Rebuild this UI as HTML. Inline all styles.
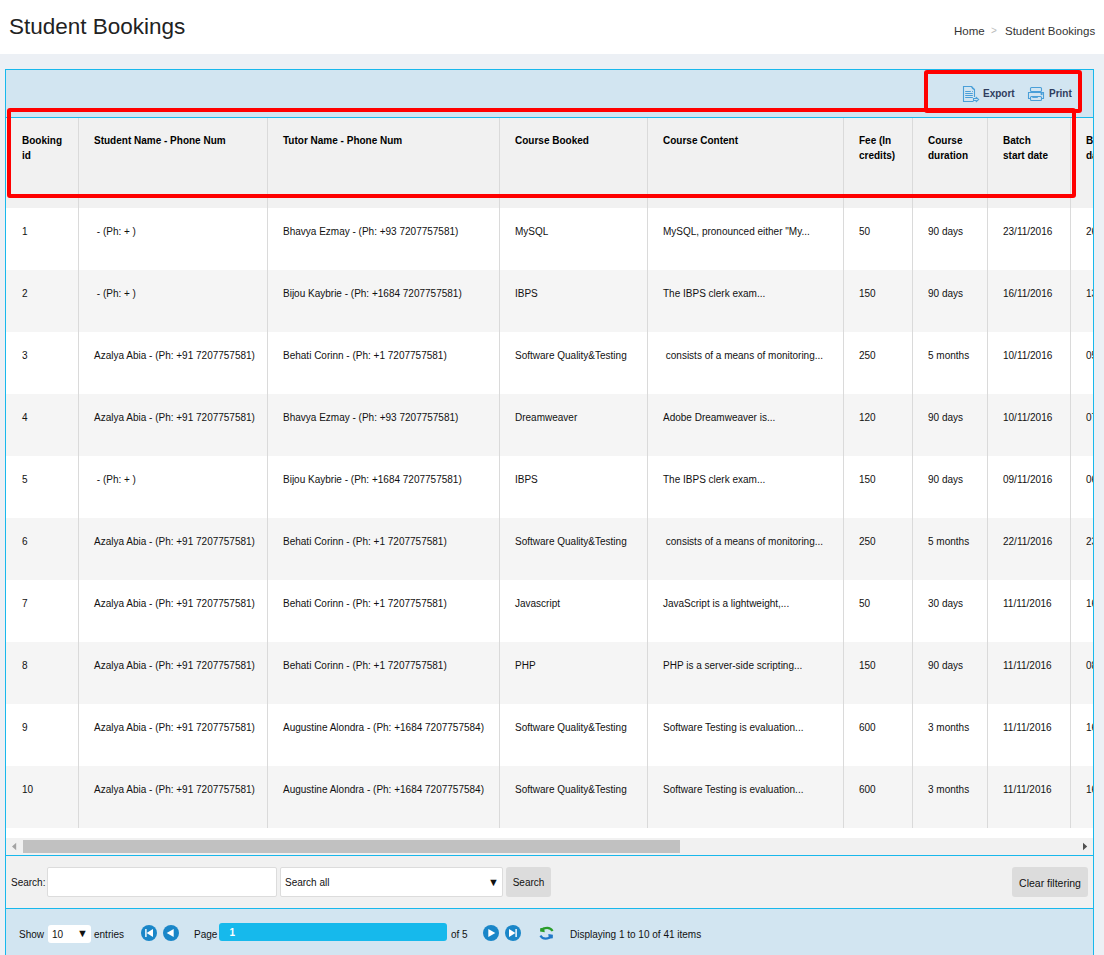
<!DOCTYPE html>
<html><head><meta charset="utf-8">
<style>
*{box-sizing:border-box;margin:0;padding:0}
html,body{width:1104px;height:955px;overflow:hidden;background:#ecf0f5;font-family:"Liberation Sans",sans-serif;color:#111;position:relative}
.a{position:absolute}
.top{position:absolute;left:0;top:0;width:1104px;height:54px;background:#fff}
h1{position:absolute;left:9px;top:13px;font-size:22.5px;font-weight:normal;color:#222;line-height:28px;white-space:nowrap}
.bc{position:absolute;left:954px;top:24px;font-size:11.5px;line-height:14px;color:#333;white-space:nowrap}
.bc .sep{color:#bbb;position:absolute;left:37px;top:0;font-size:10px}
.bc .s2{position:absolute;left:51px;top:0}
.panel{position:absolute;left:5px;top:69px;width:1089px;height:900px;border:1px solid #18b8ec;background:#d2e5f1}
.clip{position:absolute;left:6px;top:70px;width:1087px;height:900px;overflow:hidden}
.clip .in{position:absolute;left:-6px;top:-70px;width:1200px;height:1000px}
.hdr{position:absolute;left:6px;top:117px;width:1200px;height:91px;background:#f1f1f1;border-top:1px solid #18b8ec}
.c{position:absolute;padding:16px 0 0 16px;font-size:10px;line-height:15px;white-space:pre}
.th{font-weight:bold;color:#000;padding-top:15px}
.td{color:#111}
.row{position:absolute;left:6px;width:1200px;height:62px}
.vl{position:absolute;top:118px;width:1px;height:710px;background:#dadada}
.white{position:absolute;left:6px;top:828px;width:1200px;height:10px;background:#fff}
.sb{position:absolute;left:6px;top:838px;width:1087px;height:17px;background:#f1f1f1}
.thumb{position:absolute;left:23px;top:840px;width:657px;height:13px;background:#c1c1c1}
.line{position:absolute;left:6px;width:1087px;height:1px;background:#18b8ec}
.search{position:absolute;left:6px;top:856px;width:1087px;height:52px;background:#f1f1f1}
.lbl{position:absolute;font-size:10px;line-height:12px;white-space:nowrap;color:#111}
.inp{position:absolute;background:#fff;border:1px solid #dcdcdc;border-radius:2px}
.btn{position:absolute;background:#dcdcdc;border-radius:3px;font-size:10px;line-height:12px;color:#111;text-align:center;white-space:nowrap}
.pager{position:absolute;left:6px;top:909px;width:1087px;height:60px;background:#d2e5f1}
.circ{position:absolute;width:16px;height:16px;border-radius:50%;background:#1a86c8}
.circ svg{display:block}
</style></head><body>
<div class="top"></div>
<h1>Student Bookings</h1>
<div class="bc">Home<span class="sep">&gt;</span><span class="s2">Student Bookings</span></div>
<div class="panel"></div>
<div class="clip"><div class="in">
<div class="hdr"></div><div class="c th" style="left:6px;top:118px">Booking
id</div><div class="c th" style="left:78px;top:118px">Student Name - Phone Num</div><div class="c th" style="left:267px;top:118px">Tutor Name - Phone Num</div><div class="c th" style="left:499px;top:118px">Course Booked</div><div class="c th" style="left:647px;top:118px">Course Content</div><div class="c th" style="left:843px;top:118px">Fee (In
credits)</div><div class="c th" style="left:912px;top:118px">Course
duration</div><div class="c th" style="left:987px;top:118px">Batch
start date</div><div class="c th" style="left:1070px;top:118px">Booking
date</div><div class="row" style="top:208px;background:#ffffff"></div><div class="c td" style="left:6px;top:208px">1</div><div class="c td" style="left:78px;top:208px"> - (Ph: + )</div><div class="c td" style="left:267px;top:208px">Bhavya Ezmay - (Ph: +93 7207757581)</div><div class="c td" style="left:499px;top:208px">MySQL</div><div class="c td" style="left:647px;top:208px">MySQL, pronounced either "My...</div><div class="c td" style="left:843px;top:208px">50</div><div class="c td" style="left:912px;top:208px">90 days</div><div class="c td" style="left:987px;top:208px">23/11/2016</div><div class="c td" style="left:1070px;top:208px">26/11/2016</div><div class="row" style="top:270px;background:#f5f5f5"></div><div class="c td" style="left:6px;top:270px">2</div><div class="c td" style="left:78px;top:270px"> - (Ph: + )</div><div class="c td" style="left:267px;top:270px">Bijou Kaybrie - (Ph: +1684 7207757581)</div><div class="c td" style="left:499px;top:270px">IBPS</div><div class="c td" style="left:647px;top:270px">The IBPS clerk exam...</div><div class="c td" style="left:843px;top:270px">150</div><div class="c td" style="left:912px;top:270px">90 days</div><div class="c td" style="left:987px;top:270px">16/11/2016</div><div class="c td" style="left:1070px;top:270px">13/11/2016</div><div class="row" style="top:332px;background:#ffffff"></div><div class="c td" style="left:6px;top:332px">3</div><div class="c td" style="left:78px;top:332px">Azalya Abia - (Ph: +91 7207757581)</div><div class="c td" style="left:267px;top:332px">Behati Corinn - (Ph: +1 7207757581)</div><div class="c td" style="left:499px;top:332px">Software Quality&amp;Testing</div><div class="c td" style="left:647px;top:332px"> consists of a means of monitoring...</div><div class="c td" style="left:843px;top:332px">250</div><div class="c td" style="left:912px;top:332px">5 months</div><div class="c td" style="left:987px;top:332px">10/11/2016</div><div class="c td" style="left:1070px;top:332px">05/11/2016</div><div class="row" style="top:394px;background:#f5f5f5"></div><div class="c td" style="left:6px;top:394px">4</div><div class="c td" style="left:78px;top:394px">Azalya Abia - (Ph: +91 7207757581)</div><div class="c td" style="left:267px;top:394px">Bhavya Ezmay - (Ph: +93 7207757581)</div><div class="c td" style="left:499px;top:394px">Dreamweaver</div><div class="c td" style="left:647px;top:394px">Adobe Dreamweaver is...</div><div class="c td" style="left:843px;top:394px">120</div><div class="c td" style="left:912px;top:394px">90 days</div><div class="c td" style="left:987px;top:394px">10/11/2016</div><div class="c td" style="left:1070px;top:394px">07/11/2016</div><div class="row" style="top:456px;background:#ffffff"></div><div class="c td" style="left:6px;top:456px">5</div><div class="c td" style="left:78px;top:456px"> - (Ph: + )</div><div class="c td" style="left:267px;top:456px">Bijou Kaybrie - (Ph: +1684 7207757581)</div><div class="c td" style="left:499px;top:456px">IBPS</div><div class="c td" style="left:647px;top:456px">The IBPS clerk exam...</div><div class="c td" style="left:843px;top:456px">150</div><div class="c td" style="left:912px;top:456px">90 days</div><div class="c td" style="left:987px;top:456px">09/11/2016</div><div class="c td" style="left:1070px;top:456px">06/11/2016</div><div class="row" style="top:518px;background:#f5f5f5"></div><div class="c td" style="left:6px;top:518px">6</div><div class="c td" style="left:78px;top:518px">Azalya Abia - (Ph: +91 7207757581)</div><div class="c td" style="left:267px;top:518px">Behati Corinn - (Ph: +1 7207757581)</div><div class="c td" style="left:499px;top:518px">Software Quality&amp;Testing</div><div class="c td" style="left:647px;top:518px"> consists of a means of monitoring...</div><div class="c td" style="left:843px;top:518px">250</div><div class="c td" style="left:912px;top:518px">5 months</div><div class="c td" style="left:987px;top:518px">22/11/2016</div><div class="c td" style="left:1070px;top:518px">23/11/2016</div><div class="row" style="top:580px;background:#ffffff"></div><div class="c td" style="left:6px;top:580px">7</div><div class="c td" style="left:78px;top:580px">Azalya Abia - (Ph: +91 7207757581)</div><div class="c td" style="left:267px;top:580px">Behati Corinn - (Ph: +1 7207757581)</div><div class="c td" style="left:499px;top:580px">Javascript</div><div class="c td" style="left:647px;top:580px">JavaScript is a lightweight,...</div><div class="c td" style="left:843px;top:580px">50</div><div class="c td" style="left:912px;top:580px">30 days</div><div class="c td" style="left:987px;top:580px">11/11/2016</div><div class="c td" style="left:1070px;top:580px">16/11/2016</div><div class="row" style="top:642px;background:#f5f5f5"></div><div class="c td" style="left:6px;top:642px">8</div><div class="c td" style="left:78px;top:642px">Azalya Abia - (Ph: +91 7207757581)</div><div class="c td" style="left:267px;top:642px">Behati Corinn - (Ph: +1 7207757581)</div><div class="c td" style="left:499px;top:642px">PHP</div><div class="c td" style="left:647px;top:642px">PHP is a server-side scripting...</div><div class="c td" style="left:843px;top:642px">150</div><div class="c td" style="left:912px;top:642px">90 days</div><div class="c td" style="left:987px;top:642px">11/11/2016</div><div class="c td" style="left:1070px;top:642px">08/11/2016</div><div class="row" style="top:704px;background:#ffffff"></div><div class="c td" style="left:6px;top:704px">9</div><div class="c td" style="left:78px;top:704px">Azalya Abia - (Ph: +91 7207757581)</div><div class="c td" style="left:267px;top:704px">Augustine Alondra - (Ph: +1684 7207757584)</div><div class="c td" style="left:499px;top:704px">Software Quality&amp;Testing</div><div class="c td" style="left:647px;top:704px">Software Testing is evaluation...</div><div class="c td" style="left:843px;top:704px">600</div><div class="c td" style="left:912px;top:704px">3 months</div><div class="c td" style="left:987px;top:704px">11/11/2016</div><div class="c td" style="left:1070px;top:704px">16/11/2016</div><div class="row" style="top:766px;background:#f5f5f5"></div><div class="c td" style="left:6px;top:766px">10</div><div class="c td" style="left:78px;top:766px">Azalya Abia - (Ph: +91 7207757581)</div><div class="c td" style="left:267px;top:766px">Augustine Alondra - (Ph: +1684 7207757584)</div><div class="c td" style="left:499px;top:766px">Software Quality&amp;Testing</div><div class="c td" style="left:647px;top:766px">Software Testing is evaluation...</div><div class="c td" style="left:843px;top:766px">600</div><div class="c td" style="left:912px;top:766px">3 months</div><div class="c td" style="left:987px;top:766px">11/11/2016</div><div class="c td" style="left:1070px;top:766px">16/11/2016</div><div class="vl" style="left:78px"></div><div class="vl" style="left:267px"></div><div class="vl" style="left:499px"></div><div class="vl" style="left:647px"></div><div class="vl" style="left:843px"></div><div class="vl" style="left:912px"></div><div class="vl" style="left:987px"></div><div class="vl" style="left:1070px"></div>
<div class="white"></div>
</div></div>
<div class="sb"></div>
<div class="thumb"></div>
<svg class="a" style="left:6px;top:838px" width="20" height="17"><path d="M6,8.5 L10.2,4.8 V12.2 Z" fill="#a3a3a3"/></svg>
<svg class="a" style="left:1073px;top:838px" width="20" height="17"><path d="M14.2,8.5 L10,4.8 V12.2 Z" fill="#505050"/></svg>
<div class="line" style="top:855px"></div>
<div class="search"></div>
<div class="lbl" style="left:11px;top:877px">Search:</div>
<div class="inp" style="left:47px;top:867px;width:230px;height:30px"></div>
<div class="inp" style="left:280px;top:867px;width:223px;height:30px"></div>
<div class="lbl" style="left:285px;top:877px">Search all</div>
<div class="lbl" style="left:488px;top:876px;font-size:11px">&#9660;</div>
<div class="btn" style="left:506px;top:867px;width:45px;height:30px;padding-top:10px">Search</div>
<div class="btn" style="left:1012px;top:867px;width:76px;height:30px;padding-top:10px;font-size:10.5px">Clear filtering</div>
<div class="line" style="top:908px"></div>
<div class="pager"></div>
<div class="lbl" style="left:19px;top:929px">Show</div>
<div class="a" style="left:48px;top:925px;width:43px;height:18px;background:#fff;border-radius:3px"></div>
<div class="lbl" style="left:52px;top:929px">10</div>
<div class="lbl" style="left:77px;top:927px;font-size:11px">&#9660;</div>
<div class="lbl" style="left:94px;top:929px">entries</div>
<div class="circ" style="left:141px;top:925px"><svg width="16" height="16" viewBox="0 0 16 16"><rect x="4.2" y="4" width="1.4" height="8" fill="#fff"/><path d="M5.6,8 L12,4 V12 Z" fill="#fff"/></svg></div>
<div class="circ" style="left:163px;top:925px"><svg width="16" height="16" viewBox="0 0 16 16"><path d="M3.7,8 L10.7,4 V12 Z" fill="#fff"/></svg></div>
<div class="lbl" style="left:194px;top:929px">Page</div>
<div class="a" style="left:219px;top:923px;width:228px;height:18px;background:#16b9ec;border-radius:3px"></div>
<div class="lbl" style="left:229.5px;top:927px;color:#fff;font-weight:bold">1</div>
<div class="lbl" style="left:451px;top:929px">of 5</div>
<div class="circ" style="left:483px;top:925px"><svg width="16" height="16" viewBox="0 0 16 16"><path d="M12.3,8 L5.3,4 V12 Z" fill="#fff"/></svg></div>
<div class="circ" style="left:505px;top:925px"><svg width="16" height="16" viewBox="0 0 16 16"><rect x="10.4" y="4" width="1.4" height="8" fill="#fff"/><path d="M10.4,8 L4,4 V12 Z" fill="#fff"/></svg></div>
<svg class="a" style="left:534px;top:921px" width="26" height="24" viewBox="0 0 26 24">
<path d="M18.6,10 Q15.8,5.4 9.5,7.6" fill="none" stroke="#2a9d2a" stroke-width="2.1"/>
<path d="M6.2,7.2 L10.2,6.6 L10.7,11.3 L6.1,10.6 Z" fill="#2a9d2a"/>
<path d="M6.4,14.6 Q9.2,19.2 15.5,16.8" fill="none" stroke="#1f78c8" stroke-width="2.1"/>
<path d="M18.8,17.2 L14.8,17.8 L14.3,13.1 L18.9,13.8 Z" fill="#1f78c8"/>
</svg>
<div class="lbl" style="left:570px;top:929px">Displaying 1 to 10 of 41 items</div>
<svg class="a" style="left:958px;top:82px" width="26" height="23" viewBox="0 0 26 23" fill="none" stroke="#4a9fd8" stroke-width="1.1">
<path d="M16.5,15 V7.5 L13.5,4.5 H5.5 V19.5 H15.5"/>
<path d="M14,4.8 Q14,7 16.2,7.2"/>
<path d="M7.2,9.5 H12.8 M14,9.5 H14.8 M7.2,11.5 H14.8 M7.2,13.5 H14.8 M7.2,15.5 H14.8"/>
<path d="M15.5,16.5 H18 L18.3,15.5 L20.6,17.5 L18.3,19.5 L18,18.5 H15.5 Z"/>
</svg>
<div class="a" style="left:983px;top:88px;font-size:10px;line-height:12px;font-weight:bold;color:#2f3d5e">Export</div>
<svg class="a" style="left:1024px;top:82px" width="26" height="23" viewBox="0 0 26 23" fill="none" stroke="#4a9fd8" stroke-width="1.1">
<rect x="6.5" y="5.5" width="11" height="4" rx="1"/>
<path d="M6.5,16.5 H4.5 V10.5 H19.5 V16.5 H17.5"/>
<rect x="6.5" y="14.5" width="11" height="4" rx="1"/>
<path d="M8.3,15.2 H13.8" stroke-width="1.4"/>
<circle cx="17.6" cy="12" r="0.6" fill="#4a9fd8"/>
</svg>
<div class="a" style="left:1049px;top:88px;font-size:10px;line-height:12px;font-weight:bold;color:#2f3d5e">Print</div>
<div class="a" style="left:924px;top:70px;width:158px;height:43px;border:4px solid #ff0000;border-radius:3px"></div>
<div class="a" style="left:7px;top:108px;width:1069px;height:90px;border:4px solid #ff0000;border-radius:3px"></div>
</body></html>
